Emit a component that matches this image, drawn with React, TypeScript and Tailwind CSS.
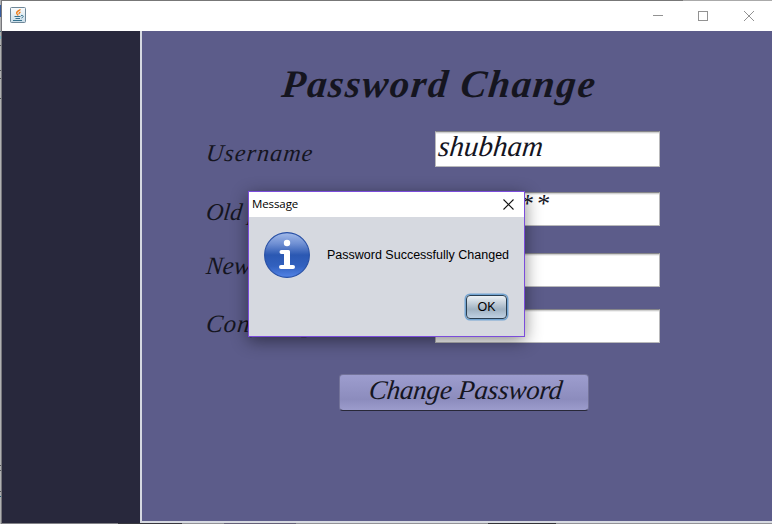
import React from "react";

const script = "font-['Liberation_Serif',serif] italic text-[#15151f] whitespace-nowrap leading-none origin-bottom-left -skew-x-6";

function JavaIcon() {
  return (
    <svg width="16" height="16" viewBox="0 0 16 16" fill="none">
      <defs>
        <linearGradient id="tile" x1="0" y1="0" x2="0" y2="1">
          <stop offset="0" stopColor="#fafcfd" />
          <stop offset="1" stopColor="#c9dde9" />
        </linearGradient>
      </defs>
      <rect x=".5" y=".5" width="15" height="15" rx="1" fill="url(#tile)" stroke="#6e8798" />
      <path d="M10.5 2.5C9 3.5 6 4.7 6.7 6.4 7 7.4 8 7.5 7.8 8.6M10.5 5C9.4 5.6 8.5 6.4 9.3 7.2" stroke="#f07c18" strokeWidth="1.3" />
      <path d="M4.5 9.5H10.5M5.5 11.5H10M3 13.5H12M11 8.5C14 8 13.8 10.3 11.5 11" stroke="#37728f" />
    </svg>
  );
}

function InfoIcon() {
  return (
    <svg width="46" height="46" viewBox="0 0 46 46" className="shrink-0">
      <defs>
        <linearGradient id="ball" x1="0" y1="0" x2="0" y2="1">
          <stop offset="0" stopColor="#a3bbea" />
          <stop offset=".25" stopColor="#6f8fd3" />
          <stop offset=".5" stopColor="#2b58b2" />
          <stop offset=".75" stopColor="#3261bf" />
          <stop offset="1" stopColor="#5384e7" />
        </linearGradient>
      </defs>
      <circle cx="23" cy="23" r="22.4" fill="url(#ball)" stroke="#2850a5" strokeWidth="1.1" />
      <circle cx="23" cy="11" r="3.2" fill="white" />
      <path d="M17.5 18H24.5Q26 18 26 19.5V33H29Q31 33 31 35T29 37H17Q15 37 15 35T17 33H20V22H17.5Q15.5 22 15.5 20T17.5 18Z" fill="white" />
    </svg>
  );
}

function Field({ children, className }: { children?: React.ReactNode; className: string }) {
  return (
    <div className={`w-[225px] shrink-0 border border-[#b9b9bb] border-t-[#858589] bg-white shadow-[inset_0_1px_0_#d0d0d0,inset_0_2px_0_#efefef] ${className}`}>
      {children}
    </div>
  );
}

export default function App() {
  return (
    <div className="relative flex h-[524px] w-[772px] overflow-hidden bg-[#b0b1b2]">
      <div className="flex w-[2px] shrink-0 flex-col border-r border-[#77777c]">
        <div className="mt-[5px] h-3 bg-[#385c9c]" />
        <div className="mt-[14px] h-px bg-[#49727c]" />
        <div className="mt-1 h-[3px] bg-[#76b5c6]" />
        <div className="mt-[6px] h-px bg-[#55565a]" />
        <div className="mt-[24px] h-px bg-[#55565a]" />
        <div className="mt-[7px] h-px bg-[#55565a]" />
        <div className="mt-[19px] h-px bg-[#55565a]" />
        <div className="mt-[366px] h-px bg-[#55565a]" />
        <div className="mt-1 h-px bg-[#55565a]" />
        <div className="mt-5 h-px bg-[#55565a]" />
        <div className="mt-1 h-px bg-[#28647c]" />
      </div>
      <div className="flex w-[770px] flex-col">
        <div className="flex h-px shrink-0">
          <div className="w-[681px] bg-[#777777]" />
          <div className="grow bg-[#aaaaaa]" />
        </div>
        <header className="flex h-[30px] shrink-0 items-center bg-white pl-2">
          <div className="-mt-[2px]"><JavaIcon /></div>
          <svg className="mr-[17px] ml-auto" width="102" height="12" viewBox="0 0 102 12" fill="none" stroke="#929292">
            <path d="M0 5.5H10" />
            <rect x="45.5" y="1.5" width="9" height="9" />
            <path d="M91 1L101 11M101 1L91 11" />
          </svg>
        </header>
        <div className="flex h-[492px] shrink-0">
          <aside className="w-[138px] shrink-0 bg-[#28283c]" />
          <main className="flex w-[632px] flex-col border-b-2 border-l-2 border-[#d6d9e1] bg-[#5c5c8a]">
            <div className="mt-[33px] h-[67px] pl-[138px]">
              <h1 className={`text-[39px] font-bold tracking-[1.7px] ${script}`}>Password Change</h1>
            </div>
            <div className="flex h-[36px] items-center">
              <label className={`mt-[8px] w-[229px] pl-[63px] text-[24px] tracking-[1.1px] ${script}`}>Username</label>
              <div className="ml-[64px] h-[36px]"><Field className="h-[36px] pl-px"><div className={`text-[29px] ${script}`}>shubham</div></Field></div>
            </div>
            <div className="mt-[25px] flex h-[34px] items-center">
              <label className={`mt-[5px] w-[229px] pl-[63px] text-[24px] ${script}`}>Old password</label>
              <div className="ml-[64px] h-[34px]"><Field className="h-[34px] pl-px"><div className={`-mt-[2px] text-[26px] tracking-[3.2px] ${script}`}>*******</div></Field></div>
            </div>
            <div className="mt-[27px] flex h-[34px] items-center">
              <label className={`-mt-[10px] w-[229px] pl-[63px] text-[25px] ${script}`}>New password</label>
              <div className="ml-[64px] h-[34px]"><Field className="h-[34px]" /></div>
            </div>
            <div className="mt-[22px] flex h-[34px] items-center">
              <label className={`-mt-[5px] w-[229px] pl-[63px] text-[25px] tracking-[1px] ${script}`}>Confirm password</label>
              <div className="ml-[64px] h-[34px]"><Field className="h-[34px]" /></div>
            </div>
            <button className="mt-[31px] ml-[197px] flex h-[37px] w-[250px] justify-center rounded-[4px] border border-[#73739a] border-b-[#282838] bg-linear-to-b from-[#9d9dce] via-[#8c8cbd] via-70% to-[#9c9ccc]">
              <span className={`mt-0.5 text-[27px] -tracking-[.2px] ${script}`}>Change Password</span>
            </button>
          </main>
        </div>
        <div className="flex h-px shrink-0">
          <div className="w-[116px] bg-[#828287]" />
          <div className="w-[64px] bg-[#38383e]" />
          <div className="w-[42px] bg-[#929296]" />
          <div className="w-[72px] bg-[#656177]" />
          <div className="w-[192px] bg-[#929296]" />
          <div className="w-[68px] bg-[#343438]" />
          <div className="grow bg-[#929296]" />
        </div>
      </div>
      <section className="absolute top-[191px] left-[248px] flex h-[146px] w-[277px] flex-col border border-[#7b4cdb] bg-[#d6d9e0] shadow-[0_4px_16px_#0007]">
        <header className="flex h-[25px] shrink-0 items-center justify-between bg-white pr-[10px] pl-[3px]">
          <span className="-mt-0.5 font-['Open_Sans',sans-serif] text-[11.5px] leading-none -tracking-[.1px] text-black">Message</span>
          <svg className="-mt-px" width="11" height="11" viewBox="0 0 11 11" stroke="#111" strokeWidth="1.1"><path d="M.5.5L10.5 10.5M10.5.5L.5 10.5" /></svg>
        </header>
        <div className="mt-[15px] flex h-[46px] items-center pl-[15px]">
          <InfoIcon />
          <p className="ml-[17px] whitespace-nowrap font-['Liberation_Sans',sans-serif] text-[12.5px] text-black">Password Successfully Changed</p>
        </div>
        <button className="mt-[17px] mr-[17px] flex h-[24px] w-[41px] items-center justify-center self-end rounded-[4px] border border-[#2a3f52] bg-linear-to-b from-[#edf1f5] via-[#a0b2c2] via-60% to-[#bfd1e3] pt-px font-['Liberation_Sans',sans-serif] text-[12.5px] text-black shadow-[0_0_0_1.5px_#73a4d1]">OK</button>
      </section>
    </div>
  );
}
